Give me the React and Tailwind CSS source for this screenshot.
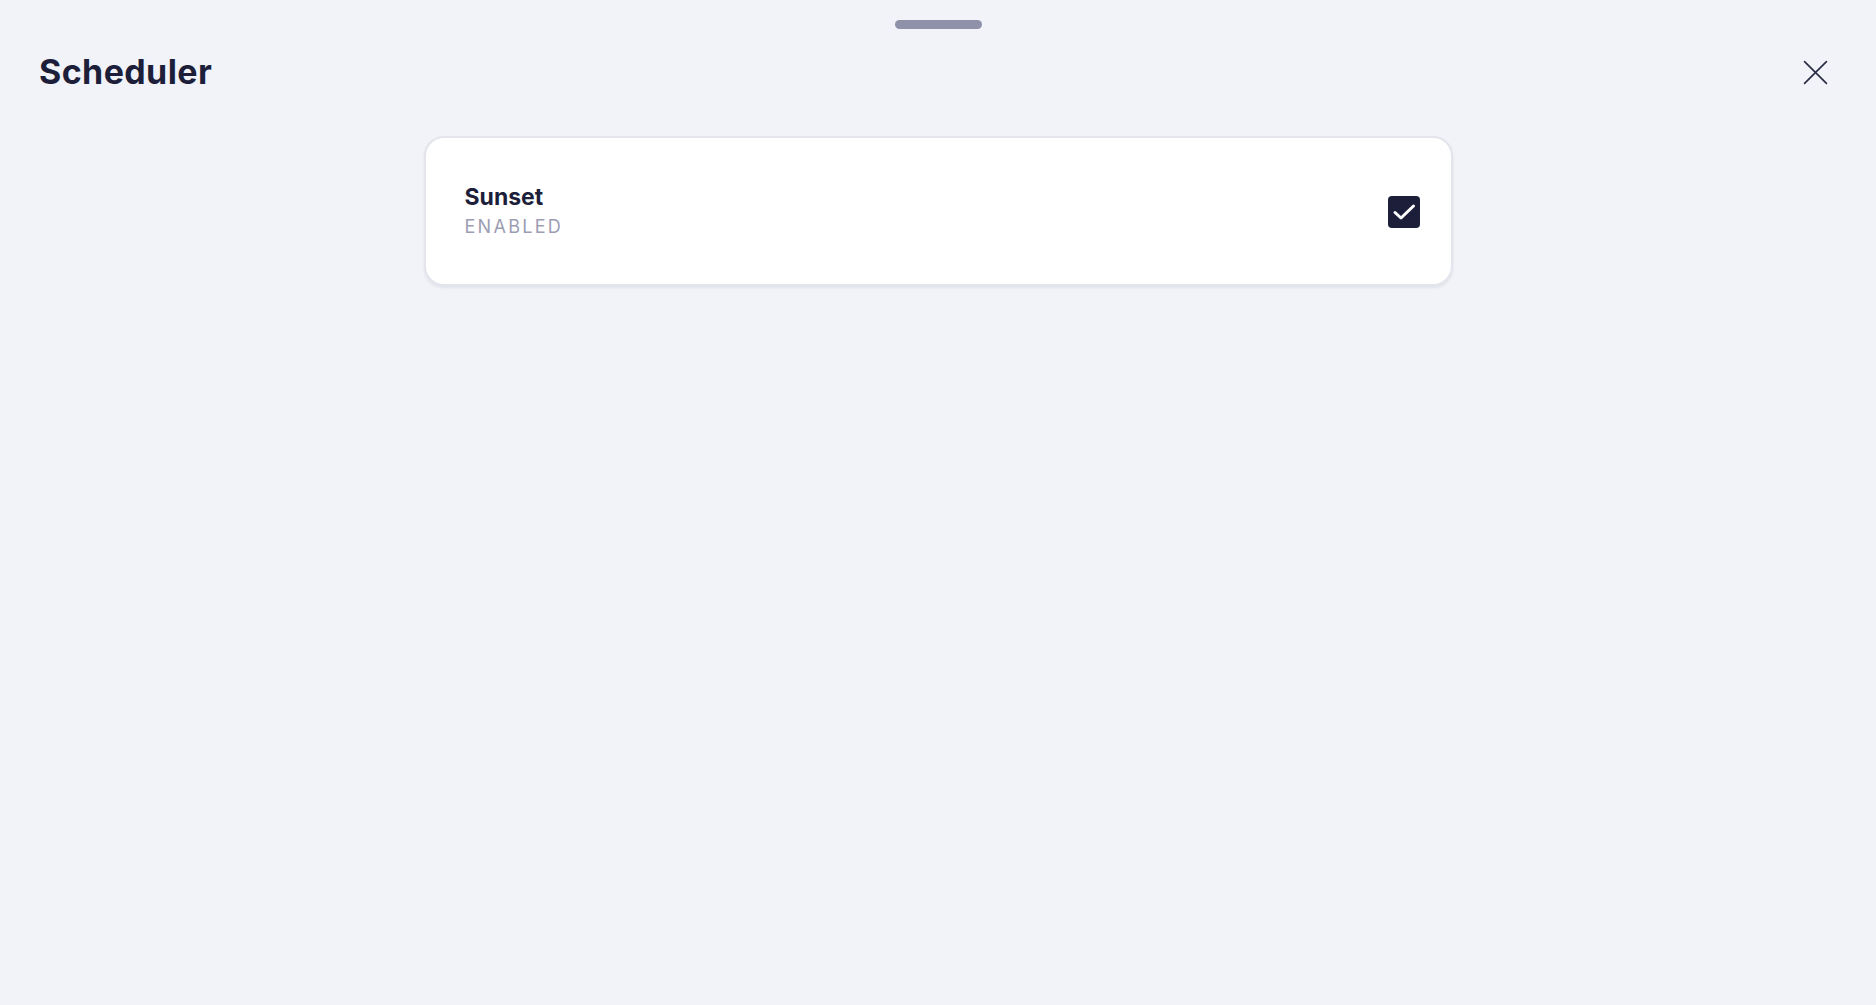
import React from 'react';

const App = () => {
  return (
    <div className="min-h-screen w-full bg-[#f2f3f8] font-['Inter',sans-serif] text-[#1d1f3a]">
      {/* Drag handle */}
      <div className="flex justify-center pt-[20px]">
        <div className="h-[9px] w-[87px] rounded-full bg-[#8f91a9]" />
      </div>

      {/* Header */}
      <div className="flex items-center justify-between pl-[39px] pr-[48px] pt-[22px]">
        <h1 className="text-[34px] font-bold leading-[42px] tracking-[0.4px]">Scheduler</h1>
        <button aria-label="Close" className="flex h-[26px] w-[26px] items-center justify-center text-[#2a2c45]">
          <svg width="25" height="25" viewBox="0 0 24 24" fill="none" stroke="currentColor" strokeWidth="1.6" strokeLinecap="round">
            <path d="M1.5 1.5L22.5 22.5M22.5 1.5L1.5 22.5" />
          </svg>
        </button>
      </div>

      {/* Schedule list */}
      <div className="flex justify-center pt-[43px]">
        <div className="flex h-[150px] w-[1029px] items-center justify-between rounded-[20px] border-2 border-[#e4e4ec] bg-white pl-[39px] pr-[31px] shadow-[0_2px_3px_rgba(30,32,60,0.08)]">
          <div className="flex flex-col">
            <span className="text-[23px] font-bold leading-[28px]">Sunset</span>
            <span className="mt-[3px] text-[18px] leading-[26px] tracking-[2.3px] text-[#9c9db3]">ENABLED</span>
          </div>
          <div className="mt-[2px] flex h-[32px] w-[32px] items-center justify-center rounded-[4px] bg-[#1d1f3a]">
            <svg width="26" height="26" viewBox="0 0 26 26" fill="none" stroke="white" strokeWidth="3" strokeLinecap="round" strokeLinejoin="round">
              <path d="M4 13.5L10 19L22.5 7" />
            </svg>
          </div>
        </div>
      </div>
    </div>
  );
};

export default App;
